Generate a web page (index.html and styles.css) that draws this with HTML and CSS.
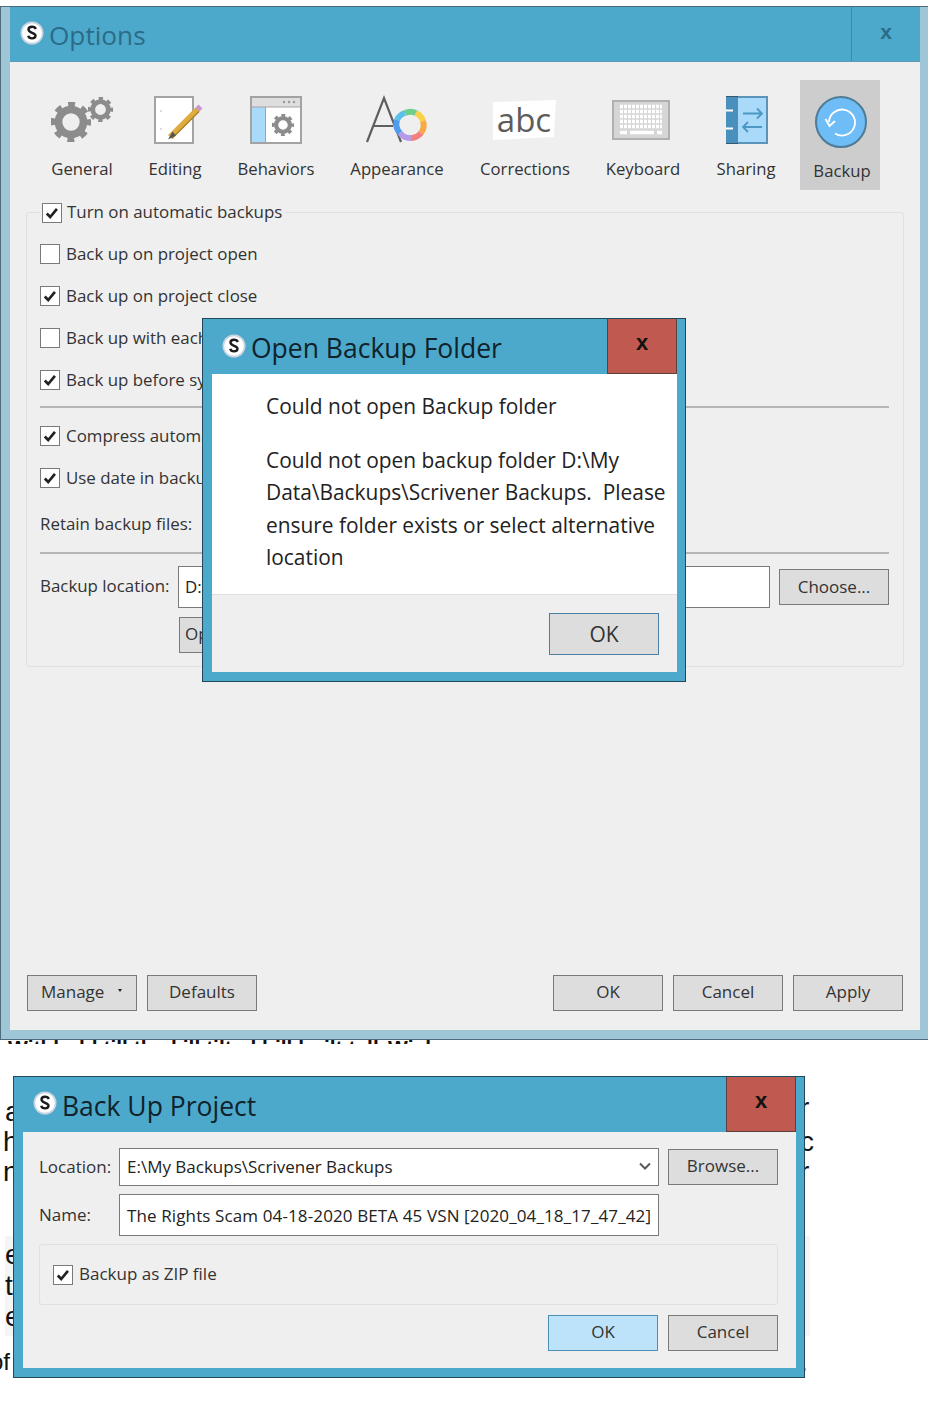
FILE: index.html
```html
<!DOCTYPE html>
<html lang="en">
<head>
<meta charset="utf-8">
<title>Scrivener backup dialogs</title>
<link rel="stylesheet" href="styles.css">
</head>
<body>
<svg class="defs" width="0" height="0" aria-hidden="true">
  <defs>
    <symbol id="s-logo" viewBox="0 0 24 24">
      <circle cx="12" cy="12" r="11.500" fill="#c9d5e0"/>
      <circle cx="12" cy="12" r="9.800" fill="#fff"/>
      <path d="M15.800 8c-.5-1.400-2-2.200-3.700-2.200-2 0-3.600 1-3.600 2.800 0 3.600 7 2.700 7 6 0 1.800-1.700 2.800-3.500 2.800-1.800 0-3.300-.8-3.800-2.700" fill="none" stroke="#1c1c1c" stroke-width="2.400"/>
    </symbol>
    <symbol id="check" viewBox="0 0 20 20">
      <path d="M4.200 10.500l3.800 4 7.500-9" fill="none" stroke="#222" stroke-width="3"/>
    </symbol>
    <symbol id="gear" viewBox="-12 -12 24 24">
      <circle r="7.500" fill="none" stroke="#8c8c8c" stroke-width="4.600"/>
      <circle r="10.500" fill="none" stroke="#8c8c8c" stroke-width="3.200" stroke-dasharray="4.100 4.147" stroke-dashoffset="2.050"/>
    </symbol>
  </defs>
</svg>

<div class="stage">
  <div class="doc-top"><span>Withhold till the kill tilted bill built tall</span><span class="doc-top-end">Wish</span></div>
  <div class="doc-left">
    <span class="dl-a">a</span><span class="dl-h">h</span><span class="dl-n">n</span>
  </div>
  <div class="doc-shade"><span>e</span><span>t</span><span>e</span></div>
  <div class="doc-shade-right"></div>
  <div class="doc-of">of</div>
  <div class="doc-right"><span class="dr-r">r</span><span class="dr-c">c</span><span class="dr-k">r</span><span class="dr-d">.</span></div>

  <section class="win win-options">
    <header class="title-options">
      <svg class="logo"><use href="#s-logo"/></svg>
      <h1 class="options-heading">Options</h1>
      <div class="close-inactive">x</div>
    </header>
    <main class="options-body">
      <nav class="toolbar">
        <div class="tool t-general">
          <svg class="tool-icon" viewBox="32 90 100 64">
            <use href="#gear" x="51" y="102" width="40" height="40"/>
            <use href="#gear" x="88" y="97" width="25" height="25"/>
          </svg>
          <span>General</span>
        </div>
        <div class="tool t-editing">
          <svg class="tool-icon" viewBox="132 90 86 64">
            <rect x="155" y="97" width="38" height="46" fill="#fff" stroke="#a3a3a3" stroke-width="2"/>
            <circle cx="161" cy="111" r=".7" fill="#999"/><circle cx="161" cy="129" r=".7" fill="#999"/>
            <path d="M170 137l28-28" stroke="#e0ac3e" stroke-width="5.500"/>
            <path d="M172 138.500l27-27" stroke="#a8832c" stroke-width="1.200"/>
            <path d="M197.500 109.500l3-3" stroke="#c996d4" stroke-width="5.500"/>
            <path d="M172.500 131.500l-4.500 8 8-4z" fill="#555"/>
          </svg>
          <span>Editing</span>
        </div>
        <div class="tool t-behaviors">
          <svg class="tool-icon" viewBox="218 90 116 64">
            <rect x="251" y="97" width="50" height="46" fill="#fff" stroke="#a3a3a3" stroke-width="2"/>
            <rect x="252" y="98" width="48" height="9" fill="#dedede"/>
            <rect x="252" y="107" width="13" height="35" fill="#a9dafa"/>
            <path d="M265.500 107v35M252 107h48" stroke="#a3a3a3"/>
            <circle cx="284" cy="102" r="1.200" fill="#999"/><circle cx="289" cy="102" r="1.200" fill="#999"/><circle cx="294" cy="102" r="1.200" fill="#999"/>
            <use href="#gear" x="272" y="114" width="22" height="22"/>
          </svg>
          <span>Behaviors</span>
        </div>
        <div class="tool t-appearance">
          <svg class="tool-icon" viewBox="334 90 126 64">
            <path d="M367 142l17-44 17 44M373 126h20" fill="none" stroke="#5f5f5f" stroke-width="2.200"/>
            <g fill="none" stroke-width="6">
              <path d="M397 120a13 13 0 0 1 8-7" stroke="#5bc1e6"/>
              <path d="M405 113a13 13 0 0 1 11 0" stroke="#6ecf8c"/>
              <path d="M416 113a13 13 0 0 1 7 8" stroke="#f8d24a"/>
              <path d="M423 121a13 13 0 0 1-2 12" stroke="#f8a945"/>
              <path d="M421 133a13 13 0 0 1-10 5" stroke="#f57f7f"/>
              <path d="M411 138a13 13 0 0 1-11-5" stroke="#b49ae8"/>
              <path d="M400 133a13 13 0 0 1-3-13" stroke="#4f9bf0"/>
            </g>
          </svg>
          <span>Appearance</span>
        </div>
        <div class="tool t-corrections">
          <svg class="tool-icon" viewBox="460 90 130 64">
            <path d="M493 102l63-2-2 37-61 3z" fill="#fff"/>
            <text x="524" y="132" text-anchor="middle" class="abc">abc</text>
          </svg>
          <span>Corrections</span>
        </div>
        <div class="tool t-keyboard">
          <svg class="tool-icon" viewBox="590 90 106 64">
            <rect x="613" y="101" width="56" height="38" fill="#d6d6d6" stroke="#b0b0b0" stroke-width="2"/>
            <path d="M620 106.500h42M620 111.500h42M620 116.500h42M620 121.500h42M620 126.500h42" stroke="#fff" stroke-width="3.500" stroke-dasharray="3 1"/>
            <path d="M630 132.500h24" stroke="#fff" stroke-width="3.500"/>
            <path d="M620 132.500h7M657 132.500h5" stroke="#fff" stroke-width="3.500"/>
          </svg>
          <span>Keyboard</span>
        </div>
        <div class="tool t-sharing">
          <svg class="tool-icon" viewBox="696 90 100 64">
            <rect x="727" y="97" width="40" height="46" fill="#a9dafa" stroke="#5b94b8" stroke-width="2"/>
            <rect x="726" y="96" width="12" height="48" fill="#4a90bd"/>
            <path d="M726 96h12v1h-12zM726 143h12v1h-12z" fill="#35566b"/>
            <path d="M726 110.500h7M726 128.500h7" stroke="#fff" stroke-width="2"/>
            <path d="M743 113.500h19m-5-5l5 5-5 5M762 127h-19m5-5l-5 5 5 5" fill="none" stroke="#4b98c4" stroke-width="1.800"/>
          </svg>
          <span>Sharing</span>
        </div>
        <div class="tool t-backup">
          <svg class="tool-icon" viewBox="800 90 80 64">
            <circle cx="841" cy="122" r="25" fill="#6fbdf7" stroke="#4e7b96" stroke-width="2"/>
            <path d="M829 122a13 13 0 1 1 6 11.500" fill="none" stroke="#fff" stroke-width="1.800"/>
            <path d="M825.500 119l4 7 5.500-5" fill="none" stroke="#fff" stroke-width="1.800"/>
          </svg>
          <span>Backup</span>
        </div>
      </nav>

      <div class="group">
        <label class="legend">
          <span class="cb cb-on"><svg><use href="#check"/></svg></span>
          <span class="cb-text">Turn on automatic backups</span>
        </label>
        <label class="row"><span class="cb"></span><span class="cb-text">Back up on project open</span></label>
        <label class="row"><span class="cb cb-on"><svg><use href="#check"/></svg></span><span class="cb-text">Back up on project close</span></label>
        <label class="row"><span class="cb"></span><span class="cb-text">Back up with each manual save</span></label>
        <label class="row"><span class="cb cb-on"><svg><use href="#check"/></svg></span><span class="cb-text">Back up before syncing</span></label>
        <hr class="rule rule-a">
        <label class="row"><span class="cb cb-on"><svg><use href="#check"/></svg></span><span class="cb-text">Compress automatic backups as zip files</span></label>
        <label class="row"><span class="cb cb-on"><svg><use href="#check"/></svg></span><span class="cb-text">Use date in backup file names</span></label>
        <div class="retain">Retain backup files:</div>
        <hr class="rule rule-b">
        <div class="location">
          <span class="location-label">Backup location:</span>
          <div class="field field-location">D:\My Data\Backups\Scrivener Backups</div>
          <button class="btn btn-choose">Choose...</button>
        </div>
        <div class="open-row"><button class="btn btn-open">Open backup folder</button></div>
      </div>

      <footer class="options-foot">
        <button class="btn btn-manage"><span>Manage</span><i class="caret"></i></button>
        <button class="btn">Defaults</button>
        <span class="spacer"></span>
        <button class="btn">OK</button>
        <button class="btn">Cancel</button>
        <button class="btn">Apply</button>
      </footer>
    </main>
  </section>

  <section class="win win-alert">
    <header class="title-dialog">
      <svg class="logo"><use href="#s-logo"/></svg>
      <h2 class="dialog-heading">Open Backup Folder</h2>
      <div class="close-active">x</div>
    </header>
    <div class="alert-body">
      <div class="alert-message">
        <p>Could not open Backup folder</p>
        <p>Could not open backup folder D:\My Data\Backups\Scrivener Backups.&nbsp; Please ensure folder exists or select alternative location</p>
      </div>
      <div class="alert-foot"><button class="btn btn-alert-ok">OK</button></div>
    </div>
  </section>

  <section class="win win-backup">
    <header class="title-dialog title-backup">
      <svg class="logo"><use href="#s-logo"/></svg>
      <h2 class="dialog-heading">Back Up Project</h2>
      <div class="close-active">x</div>
    </header>
    <div class="backup-body">
      <div class="form-row row-location">
        <span class="form-label">Location:</span>
        <div class="field field-combo"><span>E:\My Backups\Scrivener Backups</span>
          <svg class="chevron" viewBox="0 0 12 8"><path d="M1 1.500l5 5 5-5" fill="none" stroke="#5a5a5a" stroke-width="2"/></svg>
        </div>
        <button class="btn">Browse...</button>
      </div>
      <div class="form-row row-name">
        <span class="form-label label-name">Name:</span>
        <div class="field field-name">The Rights Scam 04-18-2020 BETA 45 VSN [2020_04_18_17_47_42]</div>
      </div>
      <div class="zip-group">
        <label class="zip"><span class="cb cb-on"><svg><use href="#check"/></svg></span><span class="cb-text">Backup as ZIP file</span></label>
      </div>
      <div class="backup-foot">
        <button class="btn btn-primary">OK</button>
        <button class="btn">Cancel</button>
      </div>
    </div>
  </section>
</div>
</body>
</html>
```

FILE: styles.css
```css
* { box-sizing: border-box; }
html, body { margin: 0; padding: 0; background: #fff; }
body { font-family: "Open Sans", "Noto Sans", sans-serif; color: #222; }
.defs { position: absolute; }
.stage { position: relative; width: 928px; height: 1417px; overflow: hidden; background: #fff; }

.win { position: absolute; }
.logo { width: 24px; height: 24px; flex: none; }
h1, h2, p { margin: 0; font-weight: 400; }

.btn {
  width: 110px; height: 36px; flex: none; background: #ddd; border: 1px solid #7a7a7a;
  font: inherit; font-size: 17px; color: #333; padding: 0 0 3px;
  display: inline-flex; align-items: center; justify-content: center;
}

/* Options window */
.win-options {
  left: 0; top: 6px; width: 928px; height: 1034px;
  background: #9fc6d6;
  border: 1px solid #4d6b78; border-width: 1px 0 1px 1px;
  padding: 0 8px 9px 9px;
  display: flex; flex-direction: column;
}
.title-options {
  height: 55px; flex: none; background: #4da9cc;
  display: flex; align-items: center; padding-left: 10px;
  border-bottom: 1px solid #5f9ab2;
}
.title-options .logo { margin-top: -3px; }
.options-heading { font-size: 26.200px; color: #2a6c88; margin-left: 5px; flex: 1; padding-top: 2px; }
.close-inactive {
  width: 69px; height: 54px; border-left: 1px solid #4288a4;
  display: flex; align-items: center; justify-content: center;
  color: #2a6c88; font: 700 21px "Liberation Sans", sans-serif; padding-bottom: 5px;
}
.options-body {
  flex: 1; background: #efefef; position: relative;
  display: flex; flex-direction: column;
}

.toolbar { display: flex; padding: 18px 0 0 22px; height: 146px; flex: none; }
.tool { display: flex; flex-direction: column; align-items: center; height: 110px; font-size: 16.700px; color: #333; }
.tool span { display: block; line-height: 24px; margin-top: 3px; }
.tool-icon { display: block; height: 64px; margin-top: 10px; flex: none; width: 100%; }
.t-general { width: 100px; }
.t-editing { width: 86px; }
.t-behaviors { width: 116px; }
.t-appearance { width: 126px; }
.t-corrections { width: 130px; }
.t-keyboard { width: 106px; }
.t-sharing { width: 100px; margin-right: 4px; }
.t-backup { width: 80px; background: #cdcdcd; }
.t-backup span { margin-top: 5px; margin-left: 4px; }
.abc { font-family: "Open Sans", sans-serif; font-size: 33px; fill: #5d5d5d; }

/* Group box */
.group {
  position: relative; margin: 4px 16px 0 16px; height: 455px; flex: none;
  border: 1px solid #e0e0e0; border-radius: 3px;
  padding: 31px 13px 0 13px;
  font-size: 16.900px; color: #333;
}
.legend {
  position: absolute; left: 13px; top: -10px; padding: 0 3px 0 2px; background: #efefef;
  display: flex; align-items: center; gap: 5px; height: 20px; white-space: nowrap;
}
.legend .cb-text { padding-bottom: 4px; }
.cb {
  width: 20px; height: 20px; flex: none; background: #fff; border: 1px solid #7a7a7a; display: block;
}
.cb svg { display: block; width: 18px; height: 18px; }
.cb-text { padding-bottom: 2px; }
.row { display: flex; align-items: center; gap: 6px; height: 20px; margin-bottom: 22px; white-space: nowrap; }
.rule { border: 0; height: 0; border-top: 2px solid #b5b5b5; margin: 0 1px 0 0; }
.rule-a { margin-top: -6px; margin-bottom: 18px; }
.retain { height: 24px; line-height: 24px; margin-top: 24px; }
.rule-b { margin-top: 16px; margin-bottom: 12px; }
.location { display: flex; align-items: center; height: 42px; }
.location-label { width: 138px; flex: none; padding-bottom: 3px; }
.field { background: #fff; border: 1px solid #7a7a7a; white-space: nowrap; color: #222; }
.field-location { width: 592px; height: 42px; line-height: 40px; padding-left: 6px; flex: none; overflow: hidden; }
.btn-choose { margin-left: 9px; padding-bottom: 1px; }
.open-row { padding-left: 139px; margin-top: 9px; }
.btn-open { justify-content: flex-start; padding-left: 5px; width: 180px; white-space: nowrap; }

.options-foot {
  margin-top: auto; display: flex; gap: 10px; padding: 0 17px 19px 17px; font-size: 17px;
}
.spacer { flex: 1; }
.btn-manage { justify-content: flex-start; padding-left: 13px; }
.caret { width: 0; height: 0; margin-left: 14px; margin-top: -3px; border: 2px solid transparent; border-top: 3px solid #222; border-bottom: 0; }

/* Dialogs */
.title-dialog {
  height: 55px; background: #4da9cc; display: flex; align-items: center; padding-left: 19px; flex: none; color: #102a35;
}
.dialog-heading { font-size: 26.500px; margin-left: 5px; flex: 1; color: #10222a; white-space: nowrap; padding-top: 2px; }
.close-active {
  width: 70px; height: 55px; background: #c0594f; border: 1px solid #5c4040; border-top: 0;
  display: flex; align-items: center; justify-content: center;
  font: 700 22px "Liberation Sans", sans-serif; color: #111; padding-bottom: 6px; flex: none;
}
.win-alert {
  left: 202px; top: 318px; width: 484px; height: 364px;
  background: #4da9cc; border: 1px solid #1f4a5c; padding: 0 8px 9px 9px;
  display: flex; flex-direction: column;
}
.win-alert .title-dialog { margin: 0 -8px 0 -9px; padding-right: 8px; padding-left: 19px; }
.win-alert .logo { margin-top: -2px; }
.alert-body { flex: 1; background: #fff; display: flex; flex-direction: column; }
.alert-message { flex: 1; padding: 16px 4px 0 54px; font-size: 20.900px; line-height: 32.500px; color: #222; }
.alert-message p + p { margin-top: 21px; }
.alert-foot {
  background: #efefef; border-top: 1px solid #e0e0e0; height: 78px; flex: none;
  padding: 18px 18px 0 0; display: flex; justify-content: flex-end;
}
.btn-alert-ok { height: 42px; font-size: 21px; border-color: #4a80a6; padding-bottom: 1px; }

.win-backup {
  left: 13px; top: 1076px; width: 792px; height: 302px;
  background: #4da9cc; border: 1px solid #1f4a5c; padding: 0 8px 9px 9px;
  display: flex; flex-direction: column;
}
.title-backup { margin: 0 -8px 0 -9px; padding: 0 8px 0 19px; }
.title-backup .logo { margin-top: -3px; }
.backup-body { flex: 1; background: #efefef; padding: 16px 18px 0 16px; font-size: 17px; color: #333; position: relative; }
.form-row { display: flex; align-items: center; white-space: nowrap; }
.form-label { width: 80px; flex: none; padding-bottom: 2px; }
.row-location { height: 38px; }
.row-location .btn { margin-left: 9px; }
.row-name { height: 42px; margin-top: 8px; }
.label-name { align-self: flex-start; padding-top: 9px; }
.field-combo { width: 540px; height: 38px; display: flex; align-items: center; justify-content: space-between; padding: 0 7px 2px; flex: none; }
.chevron { width: 12px; height: 8px; display: block; }
.field-name { width: 540px; height: 42px; line-height: 42px; padding-left: 7px; flex: none; overflow: hidden; letter-spacing: .12px; }
.zip-group {
  height: 61px; margin-top: 8px; border: 1px solid #e0e0e0; border-radius: 3px;
  display: flex; align-items: center; padding-left: 13px;
}
.zip { display: flex; align-items: center; gap: 6px; }
.backup-foot { display: flex; justify-content: flex-end; gap: 10px; margin-top: 10px; }
.btn-primary { background: #bde3fb; border-color: #4f8fb5; }

/* Document peeking from behind the windows */
.doc-top {
  position: absolute; left: 8px; top: 1036px; width: 430px; height: 8px; overflow: hidden;
  font: 700 21px/24px "Liberation Sans", sans-serif; color: #111;
  white-space: nowrap; display: flex; justify-content: space-between;
}
.doc-left, .doc-of, .doc-right, .doc-shade { font: 28px/30px "Liberation Sans", sans-serif; color: #111; }
.doc-left span, .doc-right span { position: absolute; }
.dl-a { left: 5px; top: 1097px; }
.dl-h { left: 3px; top: 1127px; }
.dl-n { left: 3px; top: 1157px; }
.doc-shade {
  position: absolute; left: 5px; top: 1236px; width: 10px; height: 100px; background: #f5f5f5;
  display: flex; flex-direction: column; align-items: flex-start; padding-top: 4px; gap: 1px; overflow: hidden;
}
.doc-shade-right { position: absolute; left: 805px; top: 1236px; width: 5px; height: 100px; background: #f5f5f5; }
.doc-of { position: absolute; left: -10px; top: 1347px; font-size: 24px; }
.dr-r { left: 800px; top: 1093px; }
.dr-c { left: 800px; top: 1127px; }
.dr-k { left: 800px; top: 1157px; }
.dr-d { left: 800px; top: 1347px; }
```
